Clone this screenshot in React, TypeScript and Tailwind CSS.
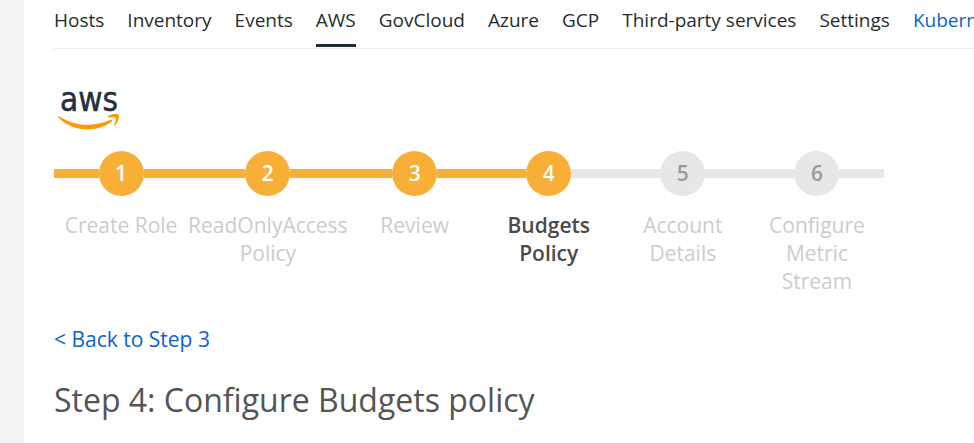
const NAV_ITEMS = [
  { href: '#hosts', label: 'Hosts' },
  { href: '#inventory', label: 'Inventory' },
  { href: '#events', label: 'Events' },
  { href: '#aws', label: 'AWS', active: true },
  { href: '#govcloud', label: 'GovCloud' },
  { href: '#azure', label: 'Azure' },
  { href: '#gcp', label: 'GCP' },
  { href: '#third-party', label: 'Third-party services' },
  { href: '#settings', label: 'Settings' },
];

const STEPS = ['Create Role', 'ReadOnlyAccess Policy', 'Review', 'Budgets Policy', 'Account Details', 'Configure Metric Stream'];
const CURRENT_STEP = 4;

function AwsLogo() {
  return (
    <svg width="66" height="46" viewBox="0 0 66 46" role="img" aria-label="aws" className="block overflow-visible">
      <text
        x="6"
        y="26"
        fill="#252f3e"
        stroke="#252f3e"
        strokeWidth="0.5"
        className="font-['DejaVu_Sans_Condensed','Open_Sans',sans-serif] text-[33px]"
      >
        aws
      </text>
      <path d="M5.2 31.200C13 36.500 23 39.800 33 39.800c7.800 0 16.300-1.700 23.700-5 1.200-.5 2.200.8 1 1.800C51.500 41.800 42 44.500 33.500 44.500 22.500 44.500 12.300 40.300 4.600 32.700c-.7-.9 0-1.900.6-1.500z" fill="#ff9900" />
      <path d="M54.200 32c-.5-.4-.2-.9.300-1.200 3-2 8.700-2.500 10-1.200 1.200 1.500-.3 8.200-3.500 11-.6.5-1.100.2-.9-.4.800-2 2.400-6.300 1.600-7.300-.8-1-5-.5-6.600-.3-.4 0-.6-.2-.9-.6z" fill="#ff9900" />
    </svg>
  );
}

function Stepper() {
  return (
    <ol className="flex">
      {STEPS.map((label, i) => {
        const step = i + 1;
        const done = step <= CURRENT_STEP;
        const current = step === CURRENT_STEP;

        return (
          <li key={label} aria-current={current ? 'step' : undefined} className="flex-1 text-center">
            <div className="flex items-center">
              <span className={`h-[9px] flex-1 ${done ? 'bg-[#f8af37]' : 'bg-[#e7e7e7]'}`} />
              <span
                className={`flex size-[45px] items-center justify-center rounded-full text-[21px] font-semibold ${
                  done ? 'bg-[#f8af37] text-white' : 'bg-[#e7e7e7] text-[#999]'
                }`}
              >
                {step}
              </span>
              <span className={`h-[9px] flex-1 ${step < CURRENT_STEP ? 'bg-[#f8af37]' : 'bg-[#e7e7e7]'}`} />
            </div>
            <p className={`mt-[15px] text-[21px] leading-7 ${current ? 'font-semibold text-[#4a4a4a]' : 'text-[#ccc]'}`}>
              {label}
            </p>
          </li>
        );
      })}
    </ol>
  );
}

export default function App() {
  return (
    <div className="flex min-h-screen bg-white font-['Open_Sans',sans-serif]">
      <aside className="w-6 shrink-0 bg-[#f2f4f4]" />

      <div className="min-w-0 flex-1 overflow-hidden pl-[30px]">
        {/* Integrations tabs */}
        <nav className="flex gap-[23px] border-b border-[#eaeded] pb-px text-[19px] leading-7 whitespace-nowrap text-[#1f2d30]">
          {NAV_ITEMS.map(({ href, label, active }) => (
            <a
              key={href}
              href={href}
              aria-current={active ? 'page' : undefined}
              className={`border-b-3 pt-1.5 pb-2.5 ${active ? 'border-[#1f2d30]' : 'border-transparent'}`}
            >
              {label}
            </a>
          ))}
          <a href="#kubernetes" className="border-b-3 border-transparent pt-1.5 pb-2.5 text-[#0b63ce]">Kubernetes</a>
        </nav>

        <main className="pt-9">
          <AwsLogo />

          <div className="mt-5 max-w-[830px]">
            <Stepper />
          </div>

          <a href="#step-3" className="mt-[30px] inline-block text-[21px] leading-7 text-[#0b63ce]">&lt; Back to Step 3</a>
          <h1 className="mt-[27px] text-[32px] leading-10 text-[#545454]">Step 4: Configure Budgets policy</h1>
        </main>
      </div>
    </div>
  );
}
